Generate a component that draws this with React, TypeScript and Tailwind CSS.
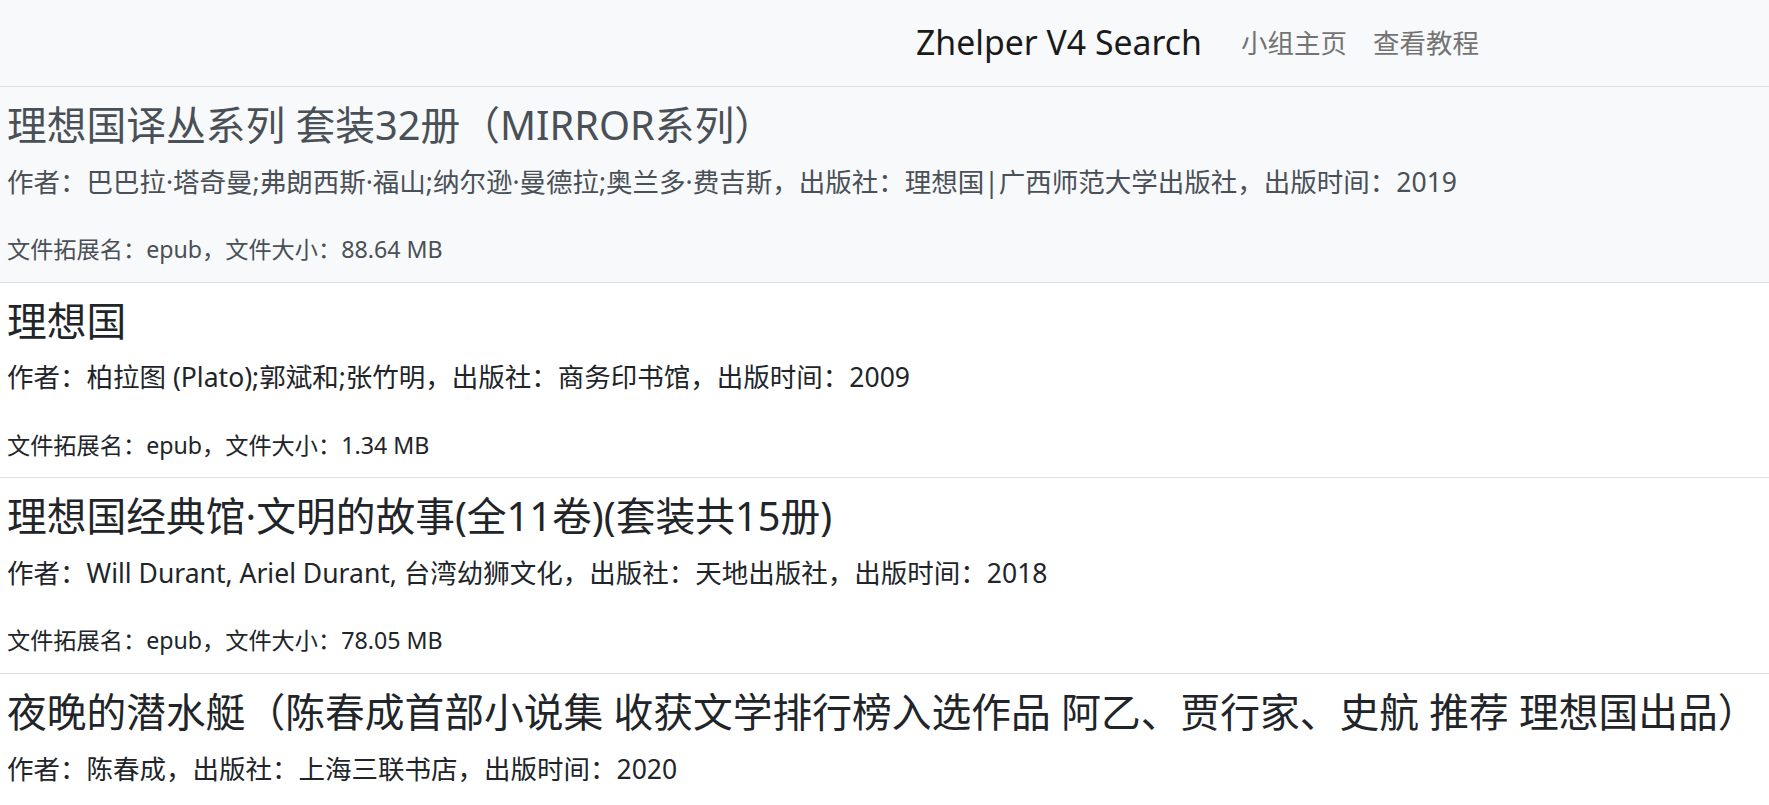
import React from "react";

type Book = {
  title: string;
  author: string;
  publisher: string;
  year: string;
  ext?: string;
  size?: string;
};

const books: Book[] = [
  {
    title: "理想国译丛系列 套装32册（MIRROR系列）",
    author: "巴巴拉·塔奇曼;弗朗西斯·福山;纳尔逊·曼德拉;奥兰多·费吉斯",
    publisher: "理想国|广西师范大学出版社",
    year: "2019",
    ext: "epub",
    size: "88.64 MB",
  },
  {
    title: "理想国",
    author: "柏拉图 (Plato);郭斌和;张竹明",
    publisher: "商务印书馆",
    year: "2009",
    ext: "epub",
    size: "1.34 MB",
  },
  {
    title: "理想国经典馆·文明的故事(全11卷)(套装共15册)",
    author: "Will Durant, Ariel Durant, 台湾幼狮文化",
    publisher: "天地出版社",
    year: "2018",
    ext: "epub",
    size: "78.05 MB",
  },
  {
    title: "夜晚的潜水艇（陈春成首部小说集 收获文学排行榜入选作品 阿乙、贾行家、史航 推荐 理想国出品）",
    author: "陈春成",
    publisher: "上海三联书店",
    year: "2020",
  },
];

export default function App() {
  return (
    <div
      className="min-h-screen bg-white text-[#212529]"
      style={{ fontFamily: '"Noto Sans", "Noto Sans CJK SC", sans-serif' }}
    >
      <nav className="flex h-[87px] items-center border-b border-[#dfdfdf] bg-[#f8f9fa] pl-[916px]">
        <span className="mr-[26px] text-[33.8px] leading-none text-[#1a1a1a]">Zhelper V4 Search</span>
        <a className="px-[13px] text-[26.5px] leading-none text-[#737373]">小组主页</a>
        <a className="px-[13px] text-[26.5px] leading-none text-[#737373]">查看教程</a>
      </nav>
      <div className="flex flex-col">
        {books.map((b, i) => (
          <div
            key={i}
            className={
              "border-b border-[#dfdfdf] pb-[12px] pl-[7px] pr-[7px] pt-[15px] " +
              (i === 0 ? "bg-[#f8f9fa] text-[#495057]" : "bg-white text-[#212529]")
            }
          >
            <h4 className="mb-[13px] whitespace-nowrap text-[39.75px] leading-[47.7px] font-normal">{b.title}</h4>
            <p className="mb-[26.5px] text-[26.5px] leading-[39.75px]">
              作者：{b.author}，出版社：{b.publisher}，出版时间：{b.year}
            </p>
            {b.ext && (
              <p className="text-[26.5px] leading-[39.75px]">
                <span className="text-[23.2px]">
                  文件拓展名：{b.ext}，文件大小：{b.size}
                </span>
              </p>
            )}
          </div>
        ))}
      </div>
    </div>
  );
}
